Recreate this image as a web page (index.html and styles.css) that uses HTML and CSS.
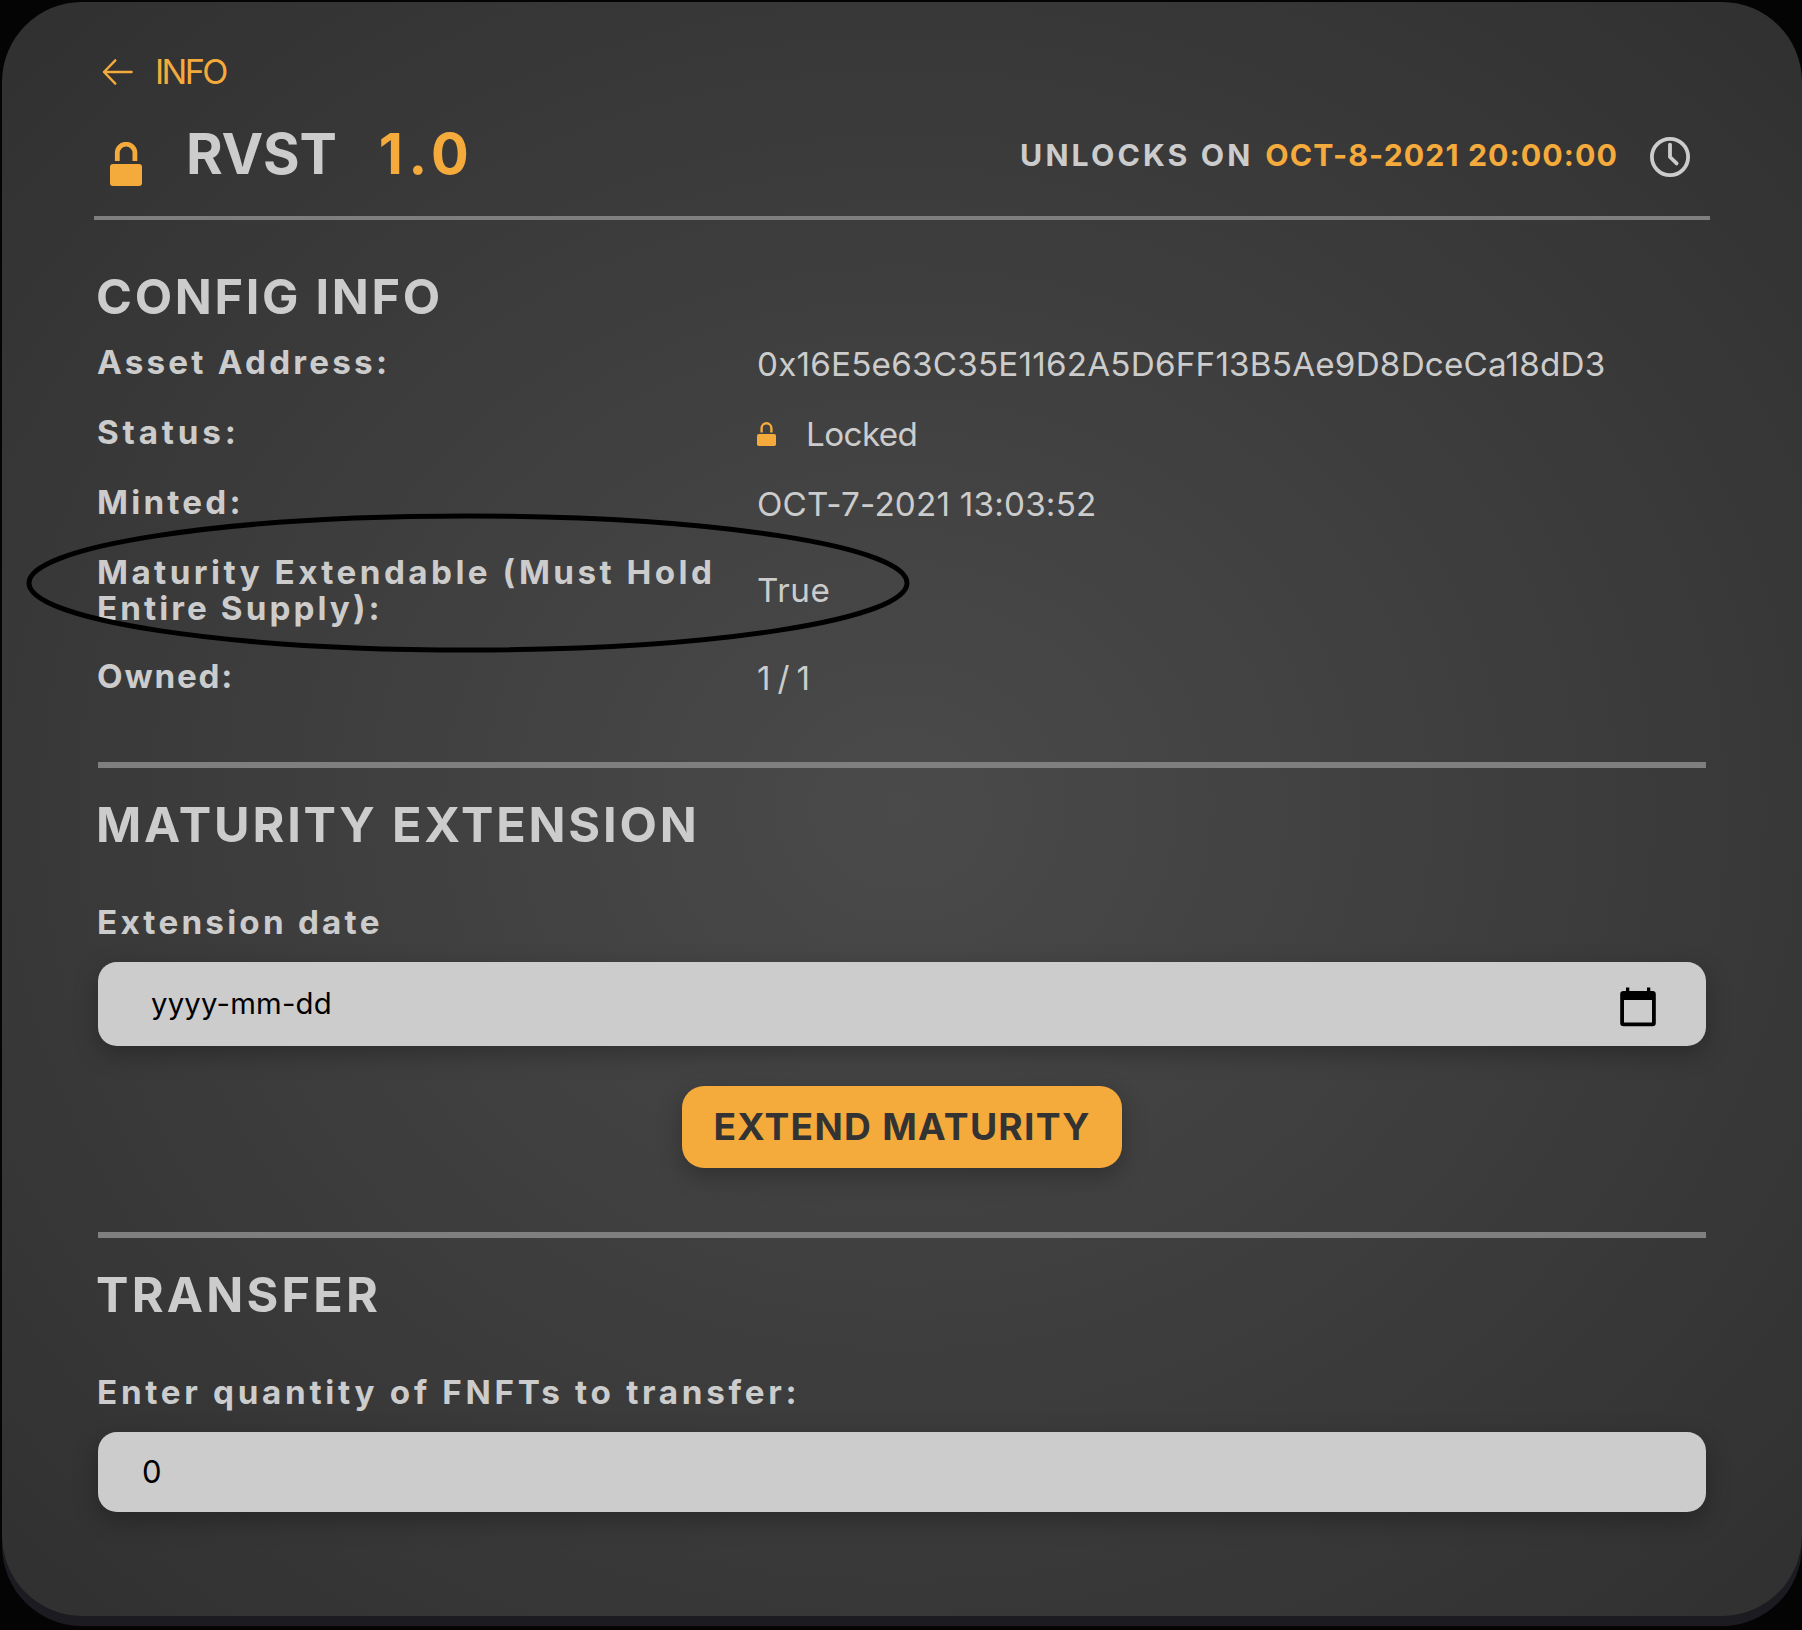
FILE: index.html
```html
<!DOCTYPE html>
<html lang="en">
<head>
<meta charset="utf-8">
<title>RVST FNFT info</title>
<link rel="stylesheet" href="styles.css">
</head>
<body>
<main class="panel">
  <a class="back">
    <svg class="back-arrow" width="32" height="28" viewBox="0 0 32 28" fill="none" stroke="currentColor" stroke-width="2.4" stroke-linecap="round" stroke-linejoin="round"><path d="M29.6 14H2M13.3 2.3 2 14l11.3 11.6"/></svg>
    <span>INFO</span>
  </a>

  <header class="header">
    <svg class="lock" width="32" height="44" viewBox="0 0 32 44"><path d="M7.3 19V11a8.8 8.8 0 0 1 17.6 0v8" fill="none" stroke="currentColor" stroke-width="4.8"/><rect y="22" width="32" height="22" rx="3" fill="currentColor"/></svg>
    <h1 class="asset">RVST</h1>
    <span class="amount">1.0</span>
    <div class="unlock"><span class="unlock-label">UNLOCKS ON</span><span class="unlock-date">OCT-8-2021 20:00:00</span></div>
    <svg class="clock" width="40" height="40" viewBox="0 0 40 40" fill="none" stroke="currentColor" stroke-width="3.8"><circle cx="20" cy="20" r="18.1"/><path d="M20 7.6V20l6.6 6.4" stroke-linecap="round" stroke-linejoin="round"/></svg>
  </header>

  <section class="config">
    <h2 class="title title-config">CONFIG INFO</h2>
    <dl class="rows">
      <div class="row"><dt class="label">Asset Address:</dt><dd class="value">0x16E5e63C35E1162A5D6FF13B5Ae9D8DceCa18dD3</dd></div>
      <div class="row"><dt class="label label-status">Status:</dt><dd class="value value-status"><svg class="lock-small" width="19" height="24" viewBox="0 0 19 24"><path d="M4.6 10.5V6.2a4.9 4.9 0 0 1 9.8 0v4.3" fill="none" stroke="currentColor" stroke-width="2.4"/><rect y="12" width="19" height="12" rx="1.8" fill="currentColor"/></svg>Locked</dd></div>
      <div class="row"><dt class="label">Minted:</dt><dd class="value">OCT-7-2021 13:03:52</dd></div>
      <div class="row row-marked"><dt class="label label-maturity">Maturity Extendable (Must Hold <span class="label-tail">Entire Supply):</span></dt><dd class="value value-true">True</dd>
        <svg class="marker" width="884" height="140" viewBox="0 0 884 140"><ellipse cx="442" cy="70" rx="439" ry="67" fill="none" stroke="#000" stroke-width="5"/></svg>
      </div>
      <div class="row row-owned"><dt class="label label-owned">Owned:</dt><dd class="value value-owned">1/1</dd></div>
    </dl>
  </section>

  <hr class="rule">
  <section>
    <h2 class="title">MATURITY EXTENSION</h2>
    <label class="label field-label" for="date">Extension date</label>
    <div class="field field-date">
      <input class="input" id="date" type="text" placeholder="yyyy-mm-dd">
      <svg class="calendar" width="36" height="40" viewBox="0 0 36 40"><path fill-rule="evenodd" d="M6 .5h3.300v3.500h17.700V.5h3.300V4H32.500a3.300 3.300 0 0 1 3.300 3.300v28.700a3.300 3.300 0 0 1-3.300 3.300h-29A3.300 3.300 0 0 1 .2 36V7.300A3.300 3.300 0 0 1 3.500 4H6zM4 13v22.600h28V13z"/></svg>
    </div>
    <button class="button">EXTEND MATURITY</button>
  </section>

  <hr class="rule rule-transfer">
  <section>
    <h2 class="title title-transfer">TRANSFER</h2>
    <label class="label field-label label-quantity" for="quantity">Enter quantity of FNFTs to transfer:</label>
    <div class="field field-quantity"><input class="input" id="quantity" type="text" value="0"></div>
  </section>
</main>
</body>
</html>
```
FILE: styles.css
```css
* {
  box-sizing: border-box;
}

html {
  background: #040404;
}

body {
  margin: 0;
  height: 1630px;
  padding: 2px 0 0 2px;
  overflow: hidden;
  font-family: Inter, "Liberation Sans", sans-serif;
  color: #cccccc;
}

.panel {
  width: 1800px;
  height: 1614px;
  padding: 50px 96px 0;
  border-radius: 80px;
  background: radial-gradient(ellipse farthest-corner at center, #4a4a4a, #303030);
  box-shadow: 0 10px 0 #1c1b22;
}

.back {
  display: flex;
  align-items: center;
  gap: 21px;
  height: 40px;
  padding-left: 4px;
  color: #f5aa3c;
  font-size: 34.2px;
  line-height: 40px;
  letter-spacing: -2.6px;
}

.header {
  display: flex;
  align-items: center;
  height: 128px;
  margin: 0 -4px 48px;
  padding: 0 20px 0 16px;
  border-bottom: 4px solid #7f7f7f;
}

.lock {
  margin-top: 20px;
  color: #f5aa3c;
}

.asset,
.amount {
  margin: 0 0 0 44px;
  font-size: 56px;
  font-weight: 700;
  line-height: 68px;
  letter-spacing: -0.2px;
}

.amount {
  margin-left: 42px;
  color: #f5aa3c;
  letter-spacing: 5.5px;
}

.unlock {
  display: flex;
  gap: 12px;
  margin-left: auto;
  padding-top: 2px;
  font-size: 30.3px;
  font-weight: 700;
  line-height: 40px;
}

.unlock-label {
  letter-spacing: 3.1px;
}

.unlock-date {
  color: #f5aa3c;
  letter-spacing: 1.08px;
}

.clock {
  margin: 6px 0 0 32px;
}

.title {
  margin: 0 0 0 -2px;
  padding-top: 1px;
  font-size: 48.6px;
  font-weight: 700;
  line-height: 55px;
  letter-spacing: 2.8px;
}

.title-config {
  margin-bottom: 20px;
  letter-spacing: 2.7px;
}

.title-transfer {
  letter-spacing: 3.2px;
}

.rows {
  display: flex;
  flex-direction: column;
  gap: 34px;
  margin: 0;
}

.row {
  display: grid;
  grid-template-columns: 659px 1fr;
  align-items: center;
  position: relative;
}

.row-owned {
  margin-top: -2px;
}

.label {
  margin-left: -1px;
  font-size: 33.25px;
  font-weight: 700;
  line-height: 36px;
  letter-spacing: 3.2px;
}

.label-status {
  letter-spacing: 3.8px;
}

.label-maturity {
  letter-spacing: 3.42px;
}

.label-tail {
  letter-spacing: 3.05px;
}

.label-owned {
  letter-spacing: 1.8px;
}

.value {
  display: flex;
  align-items: center;
  margin: 0;
  padding-top: 4px;
  font-size: 33.25px;
  line-height: 32px;
  letter-spacing: 0.19px;
}

.value-status {
  gap: 30px;
  letter-spacing: -0.6px;
}

.value-true {
  padding-top: 0;
  letter-spacing: 0.6px;
}

.value-owned {
  letter-spacing: 7px;
}

.lock-small {
  color: #f5aa3c;
}

.marker {
  position: absolute;
  left: -72px;
  top: -41px;
  pointer-events: none;
}

.rule {
  height: 6px;
  margin: 68px 0 28px;
  border: 0;
  background: #7f7f7f;
}

.rule-transfer {
  margin-top: 64px;
}

.field-label {
  display: block;
  margin: 52px 0 22px -1px;
}

.label-quantity {
  letter-spacing: 3.68px;
}

.field {
  display: flex;
  align-items: center;
  border-radius: 19px;
  background: #cccccc;
  box-shadow: 0 8px 24px rgba(0, 0, 0, 0.27);
}

.field-date {
  height: 84px;
  padding: 0 50px 0 53px;
}

.field-quantity {
  height: 80px;
  padding: 0 44px;
}

.input {
  flex: 1;
  min-width: 0;
  padding: 0;
  border: 0;
  outline: 0;
  background: transparent;
  color: #000;
  font: 400 29.3px/40px Inter, "Liberation Sans", sans-serif;
  letter-spacing: 0.2px;
}

.input::placeholder {
  color: #000;
  opacity: 1;
}

.field-quantity .input {
  padding-bottom: 1px;
  font-size: 31px;
}

.calendar {
  margin-top: 6px;
}

.button {
  display: block;
  width: 440px;
  height: 82px;
  margin: 40px auto 0;
  padding: 0;
  border: 0;
  border-radius: 22px;
  background: #f5aa3c;
  box-shadow: 0 8px 24px rgba(0, 0, 0, 0.27);
  color: #333333;
  font: 700 37.2px/44px Inter, "Liberation Sans", sans-serif;
  letter-spacing: 1.26px;
}
```
